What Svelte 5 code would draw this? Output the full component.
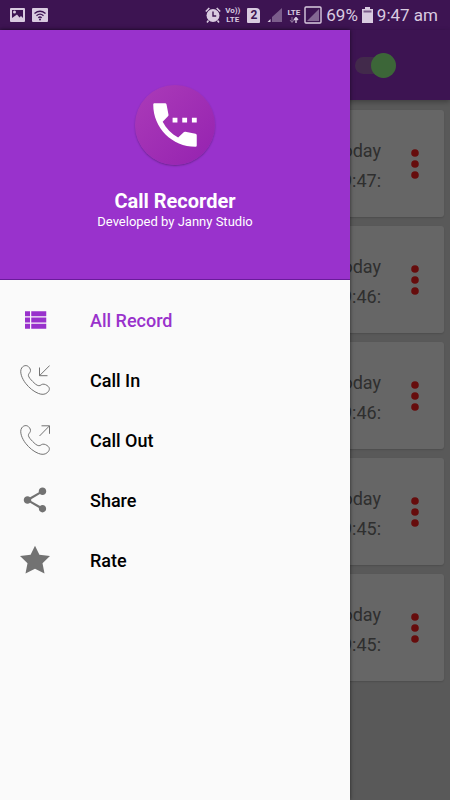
<script lang="ts">
  interface MenuItem {
    id: string;
    label: string;
  }

  const menu: MenuItem[] = [
    { id: 'all', label: 'All Record' },
    { id: 'in', label: 'Call In' },
    { id: 'out', label: 'Call Out' },
    { id: 'share', label: 'Share' },
    { id: 'rate', label: 'Rate' },
  ];

  const records = [
    { day: 'Today', time: '9:47:' },
    { day: 'Today', time: '9:46:' },
    { day: 'Today', time: '9:46:' },
    { day: 'Today', time: '9:45:' },
    { day: 'Today', time: '9:45:' },
  ];

  let active = $state('all');
  let recording = $state(true);
</script>

<div class="screen">
  <header class="status-bar">
    <div class="status-group">
      <svg width="16" height="16" viewBox="0 0 16 16">
        <rect x="0" y="1" width="15" height="14" rx="1" fill="currentColor" />
        <path d="M2 3h11v8l-2-2-1.500 1.500L7 7.500 2 11z" fill="#3d1452" />
        <circle cx="4.500" cy="5" r="1.500" fill="currentColor" />
      </svg>
      <svg width="16" height="16" viewBox="0 0 16 16">
        <rect x="0" y="1" width="16" height="14" rx="1" fill="currentColor" />
        <g fill="none" stroke="#3d1452" stroke-width="1.300">
          <path d="M2.500 6.500q5.500-4.500 11 0M4.500 8.700q3.500-3 7 0M6.300 10.700q1.700-1.400 3.400 0" />
        </g>
        <circle cx="8" cy="12.500" r="1" fill="#3d1452" />
      </svg>
    </div>
    <div class="status-group right">
      <svg width="16" height="16" viewBox="0 0 16 16">
        <circle cx="8" cy="8.500" r="6.500" fill="currentColor" />
        <path d="M.8 4.500 4.300 1M15.200 4.500 11.700 1M3.500 13.500l-1.500 2M12.500 13.500l1.500 2" stroke="currentColor" stroke-width="1.600" />
        <path d="M8 4.500v4.500h3.200" fill="none" stroke="#3d1452" stroke-width="1.400" />
      </svg>
      <span class="network"><span>Vo))</span><span>LTE</span></span>
      <span class="sim">2</span>
      <svg width="16" height="16" viewBox="0 0 16 16">
        <path d="M15 1v14H5V10z" fill="currentColor" opacity=".4" />
        <path d="M3.500 12v3H.5z" fill="currentColor" />
      </svg>
      <span class="network">
        <span>LTE</span>
        <svg width="10" height="6" viewBox="0 0 10 6">
          <path d="M3 0v5M1 3l2 2.500L5 3" fill="none" stroke="currentColor" opacity=".5" />
          <path d="M7 6V1M5 3l2-2.500L9 3" fill="none" stroke="currentColor" stroke-width="1.400" />
        </svg>
      </span>
      <svg width="18" height="18" viewBox="0 0 18 18">
        <rect x="1" y="1" width="16" height="16" rx="1" fill="none" stroke="currentColor" stroke-width="1.400" />
        <path d="M15 3v12H3z" fill="currentColor" opacity=".45" />
      </svg>
      <span class="status-text">69%</span>
      <svg width="11" height="16" viewBox="0 0 11 16">
        <path d="M3 0h5v2h3v14H0V2h3z" fill="currentColor" />
        <path d="M1.500 3.500h8v2h-8z" fill="#3d1452" opacity=".6" />
      </svg>
      <span class="status-text">9:47 am</span>
    </div>
  </header>

  <div class="app-bar">
    <input class="switch" type="checkbox" aria-label="Recording" bind:checked={recording} />
  </div>

  <main class="records">
    {#each records as record}
      <article class="card">
        <div class="when">
          <span>{record.day}</span>
          <span>{record.time}</span>
        </div>
        <button class="more" aria-label="More options">
          <svg width="10" height="32" viewBox="0 0 10 32" fill="#ff2020">
            <circle cx="5" cy="5" r="3.800" />
            <circle cx="5" cy="16" r="3.800" />
            <circle cx="5" cy="27" r="3.800" />
          </svg>
        </button>
      </article>
    {/each}
  </main>

  <div class="scrim"></div>

  <aside class="drawer">
    <div class="drawer-header">
      <div class="logo">
        <svg width="58" height="58" viewBox="0 0 24 24" fill="#fff">
          <path d="M11 9h2v2h-2zM15 9h2v2h-2zM19 9h2v2h-2z" />
          <path d="M3.600 3H7.900q.5 0 .6.500L9.300 7.700q.1.400-.2.700L6.900 10.700C8.300 13.500 10.500 15.700 13.300 17.200L15.600 15q.3-.3.700-.2l4.200.8q.5.100.5.600v4.300q0 .5-.5.500C10.800 21 3 13.200 3 3.600 3 3.200 3.200 3 3.600 3z" />
        </svg>
      </div>
      <h1>Call Recorder</h1>
      <p>Developed by Janny Studio</p>
    </div>

    <nav>
      {#each menu as item}
        <button class="menu-item" class:active={active === item.id} onclick={() => (active = item.id)}>
          {#if item.id === 'all'}
            <svg width="30" height="30" viewBox="0 0 24 24" fill="currentColor">
              <path d="M4 14h4v-4H4v4zm0 5h4v-4H4v4zM4 9h4V5H4v4zm5 5h12v-4H9v4zm0 5h12v-4H9v4zM9 5v4h12V5H9z" />
            </svg>
          {:else if item.id === 'in' || item.id === 'out'}
            <svg width="30" height="30" viewBox="0 0 30 30" fill="none" stroke="currentColor">
              <path d="M1.800 2.800C3.500.4 6.500-.1 8.400 1.600c1.700 1.500 2.500 3.300 1.900 5C9.800 8 8.300 8.800 8.400 10.400c.2 1.900 2.400 4.200 4.200 6 1.800 1.800 4.100 4.200 6.200 4.300 1.700.1 2.500-1.300 3.900-1.500 1.800-.3 3.900.7 5.600 2.300 1.800 1.700 1.200 4.300-1.100 6.200-2.500 2.100-5.500 2-8.900.7C13.900 26.600 9.200 23 5.600 18.300 2 13.500-.9 6.800 1.800 2.800z" />
              {#if item.id === 'in'}
                <path d="M29.700.5 19.500 10.700M19.500 2.500v8.200h8" />
              {:else}
                <path d="M19.500 11 29.500.8M21.500.8h8v8" />
              {/if}
            </svg>
          {:else if item.id === 'share'}
            <svg width="30" height="30" viewBox="0 0 24 24" fill="currentColor">
              <path d="M18 16.080c-.76 0-1.440.3-1.960.77L8.910 12.700c.05-.23.09-.46.09-.7s-.04-.47-.09-.7l7.050-4.110c.54.5 1.250.81 2.040.81 1.660 0 3-1.340 3-3s-1.340-3-3-3-3 1.340-3 3c0 .24.04.47.09.7L8.040 9.810C7.500 9.310 6.790 9 6 9c-1.660 0-3 1.340-3 3s1.340 3 3 3c.79 0 1.500-.31 2.040-.81l7.120 4.160c-.05.21-.08.43-.08.65 0 1.610 1.310 2.920 2.920 2.920s2.920-1.310 2.920-2.920-1.310-2.920-2.920-2.920z" />
            </svg>
          {:else}
            <svg width="30" height="30" viewBox="0 0 30 30" fill="currentColor">
              <path d="M15 .8 19.400 9.800 30 11l-7.500 7.200 2 10.300L15 23.700l-9.500 4.800 2-10.300L0 11l10.600-1.200z" />
            </svg>
          {/if}
          <span>{item.label}</span>
        </button>
      {/each}
    </nav>
  </aside>
</div>

<style>
  :global(body) {
    margin: 0;
    background: #dfdfdf;
  }

  .screen {
    position: relative;
    min-height: 100vh;
    font-family: Roboto, 'Noto Sans', sans-serif;
    background: #dfdfdf;
    overflow: hidden;
  }

  .status-bar {
    display: flex;
    justify-content: space-between;
    align-items: center;
    box-sizing: border-box;
    height: 30px;
    padding: 0 12px 0 10px;
    background: #3d1452;
    color: #d9cbe0;
  }

  .status-group {
    display: flex;
    align-items: center;
    gap: 6px;
  }

  .status-group.right {
    gap: 4px;
  }

  .network {
    display: flex;
    flex-direction: column;
    align-items: center;
    font-size: 8px;
    font-weight: 700;
    line-height: 9px;
  }

  .sim {
    width: 13px;
    margin: 0 3px;
    border-radius: 1px 4px 1px 1px;
    background: #d9cbe0;
    color: #3d1452;
    font-size: 12px;
    font-weight: 700;
    line-height: 15px;
    text-align: center;
  }

  .status-text {
    font-size: 17px;
    line-height: 30px;
    white-space: nowrap;
  }

  /* App bar */
  .app-bar {
    display: flex;
    align-items: center;
    justify-content: flex-end;
    box-sizing: border-box;
    height: 70px;
    padding-right: 54px;
    background: #9932cc;
    box-shadow: 0 2px 5px rgba(0, 0, 0, 0.3);
  }

  .switch {
    appearance: none;
    display: flex;
    align-items: center;
    width: 41px;
    height: 17px;
    margin: 0;
    border-radius: 9px;
    background: linear-gradient(to right, #a66abb 28px, transparent 28px);
  }

  .switch::before {
    content: '';
    width: 25px;
    height: 25px;
    border-radius: 50%;
    background: #eee;
  }

  .switch:checked {
    justify-content: flex-end;
  }

  .switch:checked::before {
    background: #96ff8c;
  }

  /* Recordings */
  .records {
    display: flex;
    flex-direction: column;
    gap: 9px;
    padding: 10px 6px;
  }

  .card {
    display: flex;
    align-items: center;
    justify-content: flex-end;
    gap: 29px;
    height: 107px;
    padding-right: 24px;
    border-radius: 3px;
    background: #fff;
    box-shadow: 0 1px 2px rgba(0, 0, 0, 0.15);
  }

  .when {
    display: flex;
    flex-direction: column;
    align-items: flex-end;
    padding-top: 4px;
    font-size: 18px;
    line-height: 30px;
    color: #757575;
  }

  .more {
    display: flex;
    padding: 0;
    border: none;
    background: transparent;
  }

  .scrim {
    position: absolute;
    inset: 30px 0 0;
    background: rgba(0, 0, 0, 0.6);
  }

  /* Drawer */
  .drawer {
    position: absolute;
    top: 30px;
    bottom: 0;
    left: 0;
    width: calc(100% - 100px);
    max-width: 350px;
    background: #fafafa;
    box-shadow: 0 0 4px rgba(0, 0, 0, 0.6);
  }

  .drawer-header {
    display: flex;
    flex-direction: column;
    align-items: center;
    box-sizing: border-box;
    height: 250px;
    padding-top: 55px;
    border-bottom: 1px solid #6a1b9a;
    background: #9932cc;
    color: #fff;
  }

  .logo {
    display: flex;
    align-items: center;
    justify-content: center;
    width: 80px;
    height: 80px;
    border-radius: 50%;
    background: linear-gradient(135deg, #ab3bb8, #9522b0);
    box-shadow: 0 1px 2px rgba(0, 0, 0, 0.3);
  }

  h1 {
    margin: 24px 0 0;
    font-size: 20px;
    font-weight: 700;
    line-height: 25px;
  }

  p {
    margin: 0;
    font-size: 13px;
    line-height: 16px;
  }

  nav {
    display: flex;
    flex-direction: column;
    padding-top: 10px;
  }

  .menu-item {
    display: flex;
    align-items: center;
    gap: 40px;
    height: 60px;
    padding: 0 20px;
    border: none;
    background: transparent;
    color: #000;
    font-family: inherit;
    font-size: 18px;
    font-weight: 500;
    cursor: pointer;
  }

  .menu-item svg {
    color: #727272;
  }

  .menu-item.active,
  .menu-item.active svg {
    color: #9932cc;
  }
</style>
